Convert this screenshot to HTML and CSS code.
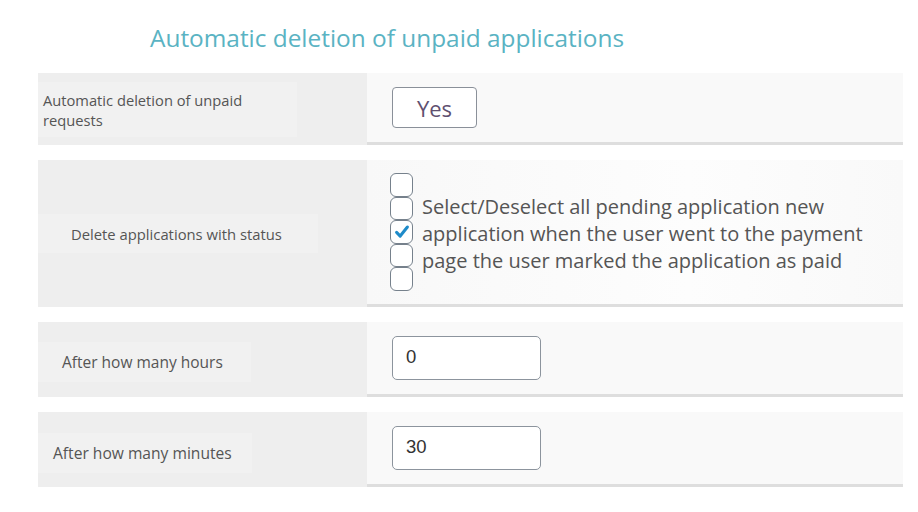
FILE: index.html
```html
<!DOCTYPE html>
<html lang="en">
<head>
<meta charset="utf-8">
<title>Automatic deletion of unpaid applications</title>
<link rel="stylesheet" href="styles.css">
</head>
<body>
<div class="page">
  <h1 class="title">Automatic deletion of unpaid applications</h1>
  <div class="form">
    <div class="row">
      <div class="cell-label"><div class="label label--auto">Automatic deletion of unpaid<br>requests</div></div>
      <div class="cell-field"><button class="btn-yes" type="button">Yes</button></div>
    </div>
    <div class="row">
      <div class="cell-label"><div class="label label--status">Delete applications with status</div></div>
      <div class="cell-field cell-field--checks">
        <div class="checks">
          <span class="box"></span>
          <span class="box"></span>
          <span class="box box--checked"><svg viewBox="0 0 20 20" width="18" height="18"><path d="M4 10.5 L8 14.5 L16 4.5" fill="none" stroke="#1e8bc9" stroke-width="3.4" stroke-linecap="round" stroke-linejoin="round"/></svg></span>
          <span class="box"></span>
          <span class="box"></span>
        </div>
        <div class="check-text">Select/Deselect all pending application new<br>application when the user went to the payment<br>page the user marked the application as paid</div>
      </div>
    </div>
    <div class="row">
      <div class="cell-label"><div class="label label--hours">After how many hours</div></div>
      <div class="cell-field"><input class="num" type="text" value="0"></div>
    </div>
    <div class="row">
      <div class="cell-label"><div class="label label--minutes">After how many minutes</div></div>
      <div class="cell-field"><input class="num" type="text" value="30"></div>
    </div>
  </div>
</div>
</body>
</html>
```
FILE: styles.css
```css
* { box-sizing: border-box; }
html, body { margin: 0; padding: 0; background: #ffffff; }
body { font-family: "Open Sans", "Noto Sans", sans-serif; color: #555555; }
.page { width: 918px; height: 512px; }
.title {
  margin: 0;
  padding: 21px 0 0 150px;
  height: 73px;
  font-size: 24.4px;
  line-height: 34px;
  font-weight: 400;
  color: #5ab3c3;
}
.form {
  margin-left: 38px;
  width: 865px;
  display: flex;
  flex-direction: column;
  gap: 15px;
}
.row {
  display: grid;
  grid-template-columns: 329px 536px;
}
.cell-label {
  background: #eeeeee;
  display: flex;
  align-items: center;
}
.label {
  background: #f1f1f1;
  font-size: 14.7px;
  line-height: 20px;
  color: #555555;
}
.label--auto { padding: 8px 55px 7px 5px; }
.label--status { padding: 10px 36px 9px 33px; font-size: 14.8px; }
.label--hours { padding: 10px 28px 10px 24px; font-size: 15.5px; margin-top: 5px; }
.label--minutes { padding: 10px 20px 10px 15px; font-size: 15.6px; margin-top: 7px; }
.cell-field {
  background: #f9f9f9;
  border-bottom: 3px solid #dedede;
  padding: 14px 0 14px 25px;
  display: flex;
  align-items: center;
}
.cell-field--checks {
  padding: 13px 0 13px 23px;
  background: linear-gradient(90deg, #f8f8f8, #fdfdfd 60%, #f9f9f9);
}
.btn-yes {
  width: 85px;
  height: 41px;
  border: 1.5px solid #8a9099;
  border-radius: 4px;
  background: #ffffff;
  font-family: "Open Sans", "Noto Sans", sans-serif;
  font-size: 22px;
  color: #604f70;
  padding: 0;
}
.checks {
  display: flex;
  flex-direction: column;
  width: 23px;
}
.box {
  display: flex;
  align-items: center;
  justify-content: center;
  width: 23px;
  height: 23.6px;
  border: 1.8px solid #76818c;
  border-radius: 6px;
  background: #ffffff;
}
.check-text {
  margin-left: 9px;
  font-size: 20px;
  line-height: 27px;
  color: #555555;
  padding-top: 4px;
}
.num {
  width: 149px;
  height: 44px;
  border: 1.5px solid #8c949d;
  border-radius: 5px;
  background: #ffffff;
  padding: 0 0 1px 13px;
  font-family: "Liberation Sans", Arial, sans-serif;
  font-size: 18.5px;
  color: #333333;
  outline: none;
}
```
